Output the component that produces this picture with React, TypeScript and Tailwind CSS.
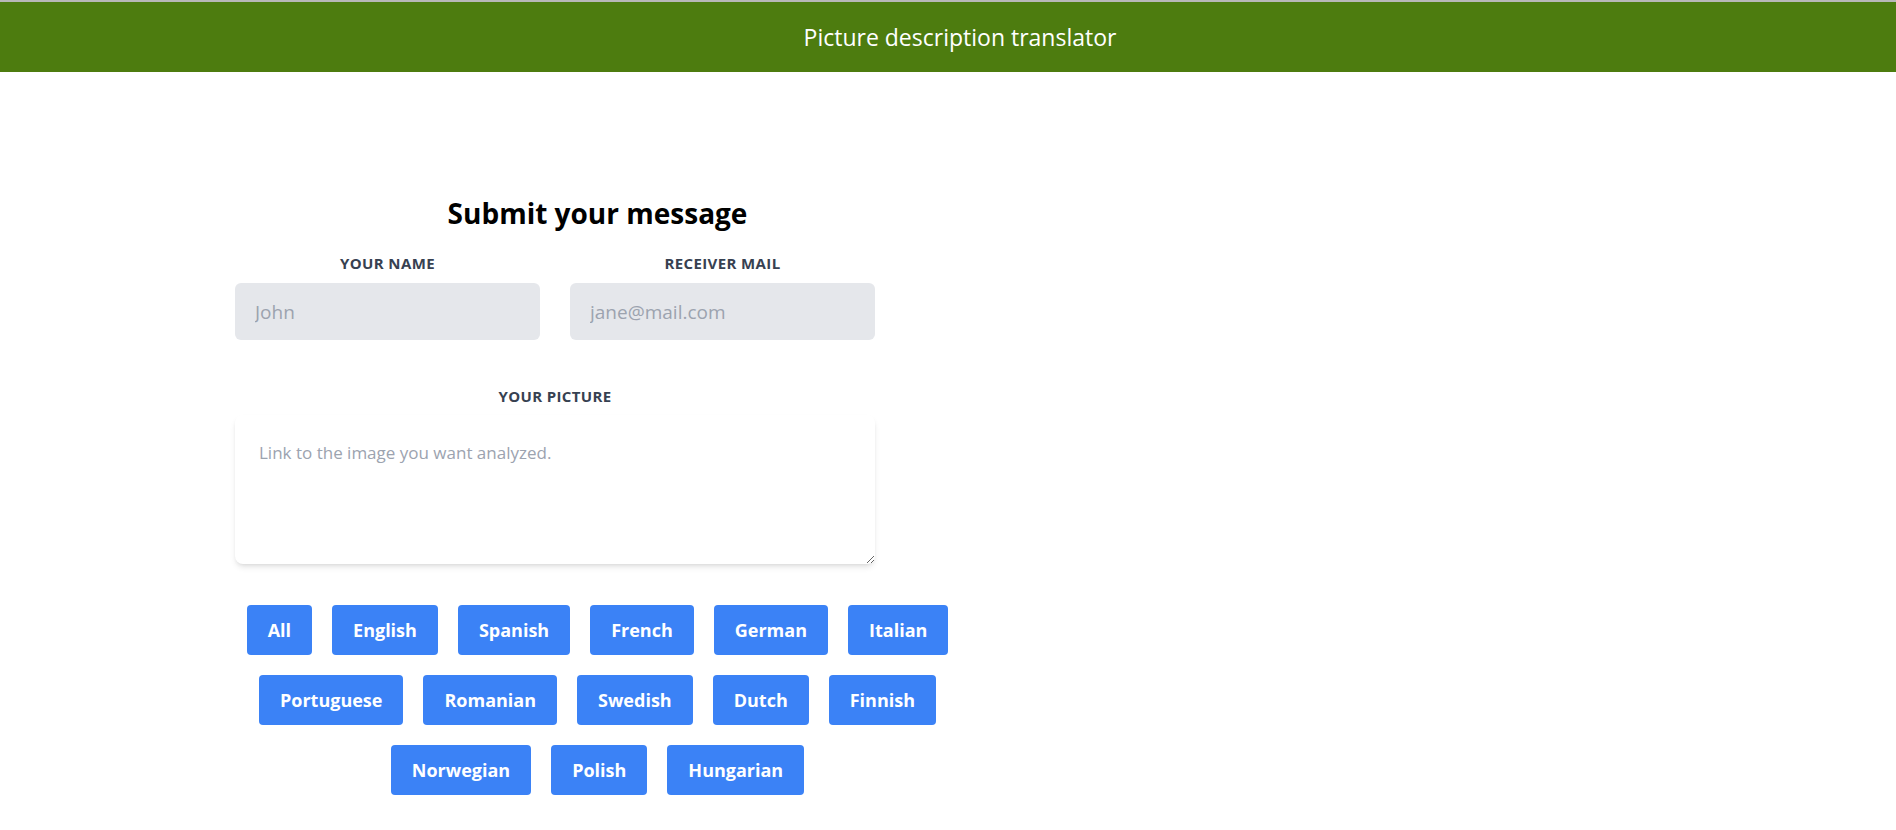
import React from "react";

const languages = [
  "All",
  "English",
  "Spanish",
  "French",
  "German",
  "Italian",
  "Portuguese",
  "Romanian",
  "Swedish",
  "Dutch",
  "Finnish",
  "Norwegian",
  "Polish",
  "Hungarian",
];

export default function App() {
  return (
    <div className="min-h-screen bg-white font-['Open_Sans','Noto_Sans',sans-serif]">
      <header className="border-t-2 border-[#b8b8b8] bg-[#4d7c0f] h-[72px] flex items-center justify-center pl-6">
        <h1 className="text-[23px] leading-8 text-white">Picture description translator</h1>
      </header>

      <main className="pl-[235px] pt-[123px] pb-10">
        <div className="w-[725px]">
          <h2 className="text-center text-[28px] leading-9 font-bold text-black mb-[22px]">
            Submit your message
          </h2>

          <form className="w-[640px]" onSubmit={(e) => e.preventDefault()}>
            <div className="grid grid-cols-2 gap-x-[30px]">
              <div>
                <label className="block text-center uppercase tracking-wide text-[15px] leading-5 font-bold text-[#374151] mb-2.5">
                  Your name
                </label>
                <input
                  type="text"
                  placeholder="John"
                  className="block w-full h-[57px] px-5 rounded-md bg-[#e5e7eb] text-[19px] text-gray-700 placeholder:text-[#9ca3af] focus:outline-none"
                />
              </div>
              <div>
                <label className="block text-center uppercase tracking-wide text-[15px] leading-5 font-bold text-[#374151] mb-2.5">
                  Receiver mail
                </label>
                <input
                  type="email"
                  placeholder="jane@mail.com"
                  className="block w-full h-[57px] px-5 rounded-md bg-[#e5e7eb] text-[19px] text-gray-700 placeholder:text-[#9ca3af] focus:outline-none"
                />
              </div>
            </div>

            <div className="mt-[46px]">
              <label className="block text-center uppercase tracking-wide text-[15px] leading-5 font-bold text-[#374151] mb-[9px]">
                Your picture
              </label>
              <textarea
                placeholder="Link to the image you want analyzed."
                className="block w-full h-[149px] px-6 pt-[26px] pb-6 rounded-lg bg-white shadow-md text-[17px] leading-6 text-gray-700 placeholder:text-[#9ca3af] focus:outline-none"
              />
            </div>
          </form>

          <div className="mt-[41px] flex flex-wrap justify-center gap-5">
            {languages.map((lang) => (
              <button
                key={lang}
                type="button"
                className="h-[50px] px-[21px] rounded bg-[#3b82f6] text-lg font-bold text-white"
              >
                {lang}
              </button>
            ))}
          </div>
        </div>
      </main>
    </div>
  );
}
